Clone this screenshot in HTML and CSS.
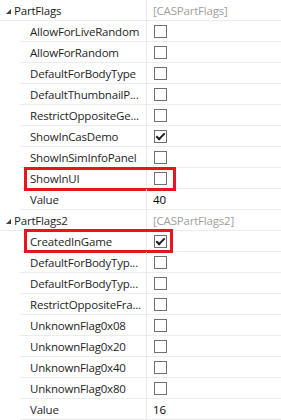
FILE: index.html
```html
<!DOCTYPE html>
<html lang="en">
<head>
    <meta charset="UTF-8">
    <meta name="viewport" content="width=device-width, initial-scale=1.0">
    <title>PartFlags</title>
    <link rel="stylesheet" href="styles.css">
</head>
<body>

<div class="grid">
    <div class="row category">
        <div class="name"><span class="arrow"></span>PartFlags</div>
        <div class="value muted">[CASPartFlags]</div>
    </div>
    <div class="row"><div class="gutter"></div><div class="name">AllowForLiveRandom</div><div class="value"><span class="check"></span></div></div>
    <div class="row"><div class="gutter"></div><div class="name">AllowForRandom</div><div class="value"><span class="check"></span></div></div>
    <div class="row"><div class="gutter"></div><div class="name">DefaultForBodyType</div><div class="value"><span class="check"></span></div></div>
    <div class="row"><div class="gutter"></div><div class="name">DefaultThumbnailP...</div><div class="value"><span class="check"></span></div></div>
    <div class="row"><div class="gutter"></div><div class="name">RestrictOppositeGe...</div><div class="value"><span class="check"></span></div></div>
    <div class="row"><div class="gutter"></div><div class="name">ShowInCasDemo</div><div class="value"><span class="check on"></span></div></div>
    <div class="row"><div class="gutter"></div><div class="name">ShowInSimInfoPanel</div><div class="value"><span class="check"></span></div></div>
    <div class="row marked mark-a"><div class="gutter"></div><div class="name">ShowInUI</div><div class="value"><span class="check"></span></div></div>
    <div class="row"><div class="gutter"></div><div class="name">Value</div><div class="value">40</div></div>

    <div class="row category">
        <div class="name"><span class="arrow"></span>PartFlags2</div>
        <div class="value muted">[CASPartFlags2]</div>
    </div>
    <div class="row marked mark-b"><div class="gutter"></div><div class="name">CreatedInGame</div><div class="value"><span class="check on"></span></div></div>
    <div class="row"><div class="gutter"></div><div class="name">DefaultForBodyTyp...</div><div class="value"><span class="check"></span></div></div>
    <div class="row"><div class="gutter"></div><div class="name">DefaultForBodyTyp...</div><div class="value"><span class="check"></span></div></div>
    <div class="row"><div class="gutter"></div><div class="name">RestrictOppositeFra...</div><div class="value"><span class="check"></span></div></div>
    <div class="row"><div class="gutter"></div><div class="name">UnknownFlag0x08</div><div class="value"><span class="check"></span></div></div>
    <div class="row"><div class="gutter"></div><div class="name">UnknownFlag0x20</div><div class="value"><span class="check"></span></div></div>
    <div class="row"><div class="gutter"></div><div class="name">UnknownFlag0x40</div><div class="value"><span class="check"></span></div></div>
    <div class="row"><div class="gutter"></div><div class="name">UnknownFlag0x80</div><div class="value"><span class="check"></span></div></div>
    <div class="row"><div class="gutter"></div><div class="name">Value</div><div class="value">16</div></div>
</div>

</body>
</html>
```

FILE: styles.css
```css
body {
    margin: 0;
    background: #ffffff;
    font-family: 'Open Sans', 'Noto Sans', sans-serif;
    font-size: 11.5px;
    letter-spacing: -0.2px;
    color: #1e1e1e;
}
.grid {
    width: 281px;
}
.row {
    position: relative;
    display: flex;
    height: 21px;
    line-height: 21px;
}
.gutter {
    width: 20px;
    flex: none;
}
.name {
    box-sizing: border-box;
    width: 127px;
    flex: none;
    padding-left: 10px;
    border-right: 1px solid #e9e9e9;
    border-bottom: 1px solid #ececec;
    white-space: nowrap;
    overflow: hidden;
}
.value {
    flex: 1;
    display: flex;
    align-items: center;
    padding-left: 6px;
    border-bottom: 1px solid #ececec;
    color: #000000;
}
.category .name {
    width: 147px;
    padding-left: 14px;
    position: relative;
}
.muted {
    color: #a0a0a0;
}
.arrow {
    position: absolute;
    left: 6px;
    top: 9px;
    width: 0;
    height: 0;
    border-left: 5px solid transparent;
    border-bottom: 5px solid #404040;
}
.check {
    box-sizing: border-box;
    width: 13px;
    height: 13px;
    margin-left: 1px;
    border: 1px solid #707070;
    background: #ffffff;
    position: relative;
}
.check.on::after {
    content: "";
    position: absolute;
    left: 3px;
    top: 0px;
    width: 3px;
    height: 7px;
    border-right: 2px solid #1e1e1e;
    border-bottom: 2px solid #1e1e1e;
    transform: rotate(45deg);
}
.marked::after {
    content: "";
    position: absolute;
    left: 24px;
    box-sizing: border-box;
    border: 3px solid #e8141e;
}
.mark-a::after {
    top: -1px;
    bottom: -2px;
    width: 152px;
}
.mark-b::after {
    top: -2px;
    bottom: -1px;
    width: 149px;
}
```
